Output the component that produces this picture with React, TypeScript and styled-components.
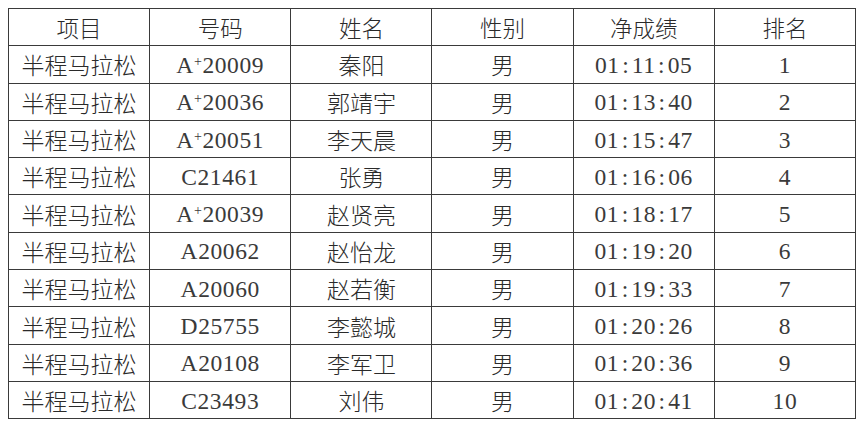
import React from "react";
import styled, {createGlobalStyle} from "styled-components";

const GlobalStyle = createGlobalStyle`
  html, body {
    margin: 0;
    padding: 0;
    background: #ffffff;
  }
`;

const Page = styled.div`
  padding: 8px 0 0 8px;
  width: 864px;
  height: 427px;
  box-sizing: border-box;
  background: #fff;
`;

const Table = styled.table`
  width: 848px;
  border-collapse: collapse;
  table-layout: fixed;
  font-family: "Liberation Serif", "Noto Sans CJK SC", serif;
  color: #2a2a2a;
`;

const Row = styled.tr`
  height: 37.3px;
`;

const HeadCell = styled.th`
  border: 1.6px solid #3a3a3a;
  padding: 0;
  font-family: "Noto Sans CJK SC", sans-serif;
  font-weight: 300;
  font-size: 22.5px;
  text-align: center;
  vertical-align: middle;
`;

const Cell = styled.td<{ cjk?: boolean }>`
  border: 1.6px solid #3a3a3a;
  padding: 0;
  padding-top: ${(p) => (p.cjk ? "0" : "2px")};
  text-align: center;
  vertical-align: middle;
  white-space: nowrap;
  font-family: ${(p) =>
    p.cjk ? `"Noto Sans CJK SC", sans-serif` : `"Liberation Serif", serif`};
  font-weight: ${(p) => (p.cjk ? 300 : 400)};
  font-size: ${(p) => (p.cjk ? "23px" : "23.5px")};
  color: ${(p) => (p.cjk ? "#2a2a2a" : "#3a3a3a")};
  letter-spacing: ${(p) => (p.cjk ? "0" : "0.6px")};
`;

const Plus = styled.span`
  font-size: 14px;
  vertical-align: 7px;
`;

const Colon = styled.span`
  margin: 0 2.5px;
`;

type Result = {
    no: string;
    name: string;
    time: string;
    rank: number;
};

const results: Result[] = [
    {no: "A+20009", name: "秦阳", time: "01:11:05", rank: 1},
    {no: "A+20036", name: "郭靖宇", time: "01:13:40", rank: 2},
    {no: "A+20051", name: "李天晨", time: "01:15:47", rank: 3},
    {no: "C21461", name: "张勇", time: "01:16:06", rank: 4},
    {no: "A+20039", name: "赵贤亮", time: "01:18:17", rank: 5},
    {no: "A20062", name: "赵怡龙", time: "01:19:20", rank: 6},
    {no: "A20060", name: "赵若衡", time: "01:19:33", rank: 7},
    {no: "D25755", name: "李懿城", time: "01:20:26", rank: 8},
    {no: "A20108", name: "李军卫", time: "01:20:36", rank: 9},
    {no: "C23493", name: "刘伟", time: "01:20:41", rank: 10},
];

const BibNumber = ({no}: { no: string }) => {
    if (no.startsWith("A+")) {
        return (
            <>
                A<Plus>+</Plus>{no.slice(2)}
            </>
        );
    }
    return <>{no}</>;
};

// colons in the times sit in a wider slot, like a monospaced font
const Time = ({value}: { value: string }) => {
    const parts = value.split(":");
    return (
        <>
            {parts.map((p, i) => (
                <React.Fragment key={i}>
                    {i > 0 && <Colon>:</Colon>}
                    {p}
                </React.Fragment>
            ))}
        </>
    );
};

const headers = ["项目", "号码", "姓名", "性别", "净成绩", "排名"];

export default function App() {
    return (
        <Page>
            <GlobalStyle/>
            <Table>
                <thead>
                <Row>
                    {headers.map((h) => (
                        <HeadCell key={h}>{h}</HeadCell>
                    ))}
                </Row>
                </thead>
                <tbody>
                {results.map((r) => (
                    <Row key={r.rank}>
                        <Cell cjk>半程马拉松</Cell>
                        <Cell><BibNumber no={r.no}/></Cell>
                        <Cell cjk>{r.name}</Cell>
                        <Cell cjk>男</Cell>
                        <Cell><Time value={r.time}/></Cell>
                        <Cell>{r.rank}</Cell>
                    </Row>
                ))}
                </tbody>
            </Table>
        </Page>
    );
}
